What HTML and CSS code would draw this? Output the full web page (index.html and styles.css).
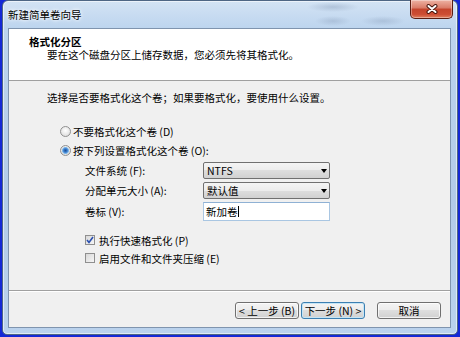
FILE: index.html
```html
<!DOCTYPE html>
<html lang="zh-CN">
<head>
    <meta charset="UTF-8">
    <meta name="viewport" content="width=device-width, initial-scale=1.0">
    <title>新建简单卷向导</title>
    <link rel="stylesheet" href="styles.css">
</head>
<body>

    <div class="window">
        <div class="titlebar">
            <span class="title">新建简单卷向导</span>
            <button class="close-button" aria-label="关闭">
                <svg width="12" height="10" viewBox="0 0 12 10">
                    <path d="M2.5 2 L9.5 8 M9.5 2 L2.5 8" stroke="#4a1810" stroke-width="4" stroke-linecap="round"/>
                    <path d="M2.5 2 L9.5 8 M9.5 2 L2.5 8" stroke="#ffffff" stroke-width="2" stroke-linecap="round"/>
                </svg>
            </button>
        </div>

        <div class="client">
            <div class="header">
                <div class="header-title">格式化分区</div>
                <div class="header-sub">要在这个磁盘分区上储存数据，您必须先将其格式化。</div>
            </div>

            <div class="content">
                <p class="intro">选择是否要格式化这个卷；如果要格式化，要使用什么设置。</p>

                <div class="options">
                    <div class="radio-row"><span class="radio"></span>不要格式化这个卷 (D)</div>
                    <div class="radio-row"><span class="radio checked"></span>按下列设置格式化这个卷 (O):</div>
                </div>

                <div class="form">
                    <span class="label">文件系统 (F):</span>
                    <div class="combo"><span>NTFS</span><span class="arrow"></span></div>
                    <span class="label">分配单元大小 (A):</span>
                    <div class="combo"><span>默认值</span><span class="arrow"></span></div>
                    <span class="label">卷标 (V):</span>
                    <div class="textbox"><span>新加卷</span><span class="caret"></span></div>
                </div>

                <div class="checks">
                    <div class="check-row">
                        <span class="checkbox">
                            <svg width="8" height="8" viewBox="0 0 8 8">
                                <path d="M1 4 L3 6.5 L7 1" fill="none" stroke="#2a4fb0" stroke-width="1.6"/>
                            </svg>
                        </span>
                        执行快速格式化 (P)
                    </div>
                    <div class="check-row"><span class="checkbox"></span>启用文件和文件夹压缩 (E)</div>
                </div>
            </div>

            <div class="footer">
                <button class="button">&lt; 上一步 (B)</button>
                <button class="button default">下一步 (N) &gt;</button>
                <button class="button cancel">取消</button>
            </div>
        </div>
    </div>

</body>
</html>
```

FILE: styles.css
```css
body {
    margin: 0;
    width: 460px;
    height: 337px;
    overflow: hidden;
    background-color: #1428d6;
    font-family: "Noto Sans CJK SC", sans-serif;
    font-size: 10.5px;
    color: #000;
}

.window {
    box-sizing: border-box;
    width: 456px;
    height: 335px;
    margin-left: 2px;
    display: flex;
    flex-direction: column;
    padding: 0 6px 6px 5px;
    border: 1px solid #4e6684;
    border-radius: 6px 6px 5px 5px;
    background:
        radial-gradient(ellipse 26px 5px at 330px 6px, rgba(120, 140, 170, 0.35), transparent),
        radial-gradient(ellipse 22px 5px at 380px 20px, rgba(120, 140, 170, 0.3), transparent),
        radial-gradient(ellipse 18px 5px at 330px 20px, rgba(120, 140, 170, 0.3), transparent),
        linear-gradient(180deg, #d3e3f4 0, #bcd4ee 28px, #b2cbe9 60%, #bad2ed 100%);
    box-shadow: inset 0 0 0 1px rgba(255, 255, 255, 0.55);
}

.titlebar {
    height: 27px;
    flex-shrink: 0;
    display: flex;
    align-items: flex-start;
}

.title {
    padding-top: 7px;
    line-height: 14px;
    text-shadow: 0 0 5px #fff, 0 0 3px #fff;
}

.close-button {
    margin-left: auto;
    margin-right: -2px;
    margin-top: -1px;
    width: 43px;
    height: 19px;
    padding: 0;
    display: flex;
    align-items: center;
    justify-content: center;
    border: 1px solid #5a1d12;
    border-top: none;
    border-radius: 0 0 5px 5px;
    background: linear-gradient(180deg, #eeb3a4 0, #d97a66 45%, #c4442c 50%, #cd4d33 80%, #e0805f 100%);
    box-shadow: inset 0 0 0 1px rgba(255, 255, 255, 0.35);
}

.client {
    flex: 1;
    display: flex;
    flex-direction: column;
    border: 1px solid #7f94ae;
    background-color: #f0f0f0;
}

.header {
    box-sizing: border-box;
    height: 52px;
    flex-shrink: 0;
    padding-top: 6px;
    background-color: #fff;
    border-bottom: 1px solid #a0a0a0;
}

.header-title {
    font-weight: bold;
    line-height: 13px;
    padding-left: 20px;
}

.header-sub {
    line-height: 13px;
    padding-left: 38px;
}

.content {
    flex: 1;
    padding: 10px 0 0 38px;
}

.intro {
    margin: 0;
    line-height: 14px;
}

.options {
    margin: 17px 0 0 13px;
}

.radio-row {
    height: 19px;
    display: flex;
    align-items: center;
    gap: 2px;
}

.radio {
    box-sizing: border-box;
    width: 11px;
    height: 11px;
    border-radius: 50%;
    border: 1px solid #919191;
    background: radial-gradient(circle at 50% 40%, #ffffff 0, #e2e2e2 70%, #cfcfcf 100%);
}

.radio.checked {
    background:
        radial-gradient(circle at 50% 50%, #1c4f96 0, #3a7ccc 1.8px, #86bdec 3.2px, rgba(255, 255, 255, 0) 3.8px),
        radial-gradient(circle at 50% 40%, #ffffff 0, #e2e2e2 70%, #cfcfcf 100%);
}

.form {
    display: grid;
    grid-template-columns: 118px 127px;
    grid-template-rows: 17px 17px 19px;
    row-gap: 3px;
    align-items: center;
    margin: 2px 0 0 38px;
}

.label {
    line-height: 14px;
}

.combo {
    box-sizing: border-box;
    height: 17px;
    display: flex;
    align-items: center;
    padding: 0 2px 0 3px;
    border: 1px solid #707070;
    border-radius: 2px;
    background: linear-gradient(180deg, #f4f4f4 0, #ececec 50%, #dedede 50%, #d1d1d1 100%);
    line-height: 14px;
}

.arrow {
    margin-left: auto;
    width: 0;
    height: 0;
    border-left: 3.5px solid transparent;
    border-right: 3.5px solid transparent;
    border-top: 4px solid #000;
}

.textbox {
    box-sizing: border-box;
    height: 19px;
    display: flex;
    align-items: center;
    padding-left: 2px;
    background-color: #fff;
    border: 1px solid #a9c6e2;
    border-top-color: #8fb1d4;
    line-height: 14px;
}

.caret {
    width: 1px;
    height: 11px;
    background-color: #000;
}

.checks {
    margin: 10px 0 0 38px;
}

.check-row {
    height: 18px;
    display: flex;
    align-items: center;
    gap: 4px;
}

.checkbox {
    box-sizing: border-box;
    width: 10px;
    height: 10px;
    display: flex;
    align-items: center;
    justify-content: center;
    border: 1px solid #8f8f8f;
    background: linear-gradient(135deg, #d8d8d8 0, #f6f6f6 100%);
}

.footer {
    box-sizing: border-box;
    height: 37px;
    flex-shrink: 0;
    display: flex;
    justify-content: flex-end;
    align-items: flex-start;
    padding: 11px 9px 0 0;
    border-top: 1px solid #a0a0a0;
    box-shadow: inset 0 1px 0 #fff;
}

.button {
    box-sizing: border-box;
    width: 64px;
    height: 17px;
    padding: 0;
    font-family: inherit;
    font-size: 10.5px;
    line-height: 14px;
    color: #000;
    white-space: nowrap;
    border: 1px solid #707070;
    border-radius: 3px;
    background: linear-gradient(180deg, #f4f4f4 0, #ececec 50%, #dedede 50%, #d1d1d1 100%);
    box-shadow: inset 0 0 0 1px rgba(255, 255, 255, 0.7);
}

.button.default {
    margin-left: 2px;
    border-color: #3c7fb1;
    box-shadow: inset 0 0 0 1px #c4e5f6;
}

.button.cancel {
    margin-left: 12px;
}
```
